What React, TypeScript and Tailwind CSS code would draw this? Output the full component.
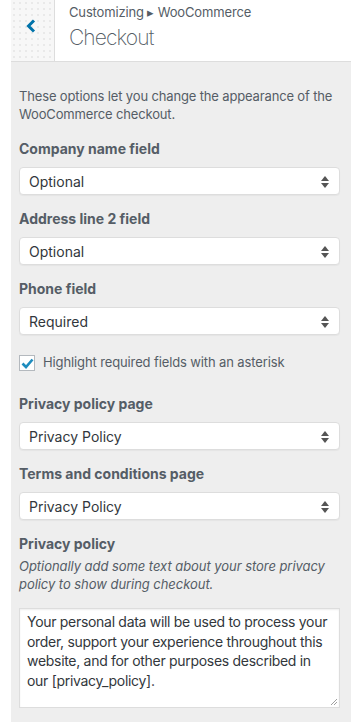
import React from 'react';

const font = { fontFamily: 'Inter, "Liberation Sans", Arial, sans-serif' };

function SelectBox({ value }: { value: string }) {
  return (
    <div className="relative flex items-center h-[28px] w-[321px] bg-white border border-[#ddd] rounded-[4px] shadow-[0_1px_1px_rgba(0,0,0,0.04)] pl-[9px] text-[14px] text-[#32373c]">
      <span>{value}</span>
      <svg className="absolute right-[10px] top-[8px]" width="8" height="12" viewBox="0 0 8 12">
        <path d="M4 0 L8 5 L0 5 Z" fill="#555" />
        <path d="M0 7 L8 7 L4 12 Z" fill="#555" />
      </svg>
    </div>
  );
}

function Field({ label, value }: { label: string; value: string }) {
  return (
    <div className="mb-[14px]">
      <div className="h-[20px] leading-[20px] text-[14px] font-bold text-[#555d66] mb-[8px]">{label}</div>
      <SelectBox value={value} />
    </div>
  );
}

export default function App(): JSX.Element {
  return (
    <div className="w-[355px] h-[722px] bg-white overflow-hidden" style={font}>
      <div className="ml-[11px] w-[340px] h-full bg-[#eeeeee]">
        {/* header */}
        <div className="flex h-[62px] bg-white border-b border-[#dddddd]">
          <div className="w-[44px] flex items-start justify-center pt-[19px] pr-[4px] bg-[#f7f7f7] border-r border-[#dddddd] bg-[radial-gradient(#e9e9e9_1px,transparent_1px)] bg-[length:6px_6px]">
            <svg width="10" height="14" viewBox="0 0 10 14">
              <path d="M8 1.5 L2.5 7 L8 12.5" fill="none" stroke="#0073aa" strokeWidth="3" />
            </svg>
          </div>
          <div className="pl-[14px] pt-[3px]">
            <div className="text-[13px] leading-[18px] text-[#555d66] tracking-[-0.15px]">Customizing ▸ WooCommerce</div>
            <div className="text-[21px] leading-[28px] font-extralight text-[#555d66] mt-[3px] tracking-[-0.9px]">Checkout</div>
          </div>
        </div>

        {/* body */}
        <div className="pl-[8px] pt-[25px]">
          <p className="text-[13px] leading-[18px] text-[#555d66] pr-[10px] tracking-[-0.15px]">
            These options let you change the appearance of the WooCommerce checkout.
          </p>
          <div className="mt-[16px]">
            <Field label="Company name field" value="Optional" />
            <Field label="Address line 2 field" value="Optional" />
            <Field label="Phone field" value="Required" />
            <div className="flex items-center h-[28px] mb-[17px]">
              <div className="w-[16px] h-[16px] bg-white border border-[#b4b9be] flex items-center justify-center">
                <svg width="13" height="11" viewBox="0 0 13 11">
                  <path d="M1.5 5.5 L5 9 L11.5 1.5" fill="none" stroke="#1e8cbe" strokeWidth="2.6" />
                </svg>
              </div>
              <span className="ml-[8px] text-[13px] text-[#555d66] tracking-[-0.12px]">Highlight required fields with an asterisk</span>
            </div>
            <Field label="Privacy policy page" value="Privacy Policy" />
            <Field label="Terms and conditions page" value="Privacy Policy" />
            <div className="h-[20px] leading-[20px] text-[14px] font-bold text-[#555d66]">Privacy policy</div>
            <p className="text-[13px] leading-[18px] italic text-[#555d66] mt-[3px] pr-[10px] tracking-[-0.05px]">
              Optionally add some text about your store privacy policy to show during checkout.
            </p>
            <div className="relative mt-[15px] w-[321px] h-[100px] bg-white border border-[#ddd] shadow-[inset_0_1px_2px_rgba(0,0,0,0.07)] pl-[7px] pr-[4px] pt-[3px] text-[14px] leading-[19.5px] text-[#32373c] tracking-[-0.3px]">
              Your personal data will be used to process your order, support your experience throughout this website, and for other purposes described in our [privacy_policy].
              <svg className="absolute right-[2px] bottom-[2px]" width="7" height="7" viewBox="0 0 7 7">
                <path d="M1 7 L7 1 M4 7 L7 4" stroke="#888" strokeWidth="0.8" />
              </svg>
            </div>
          </div>
        </div>
      </div>
    </div>
  );
}
